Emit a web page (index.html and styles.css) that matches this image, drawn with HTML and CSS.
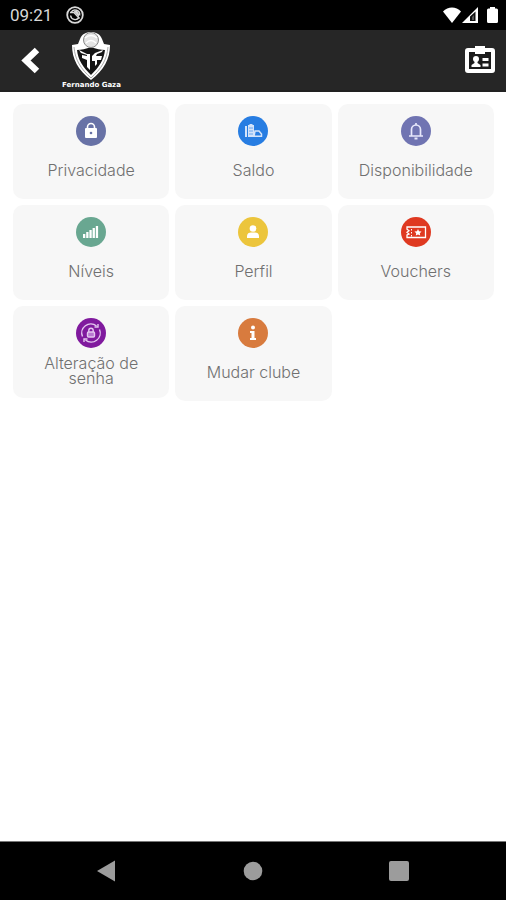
FILE: index.html
```html
<!DOCTYPE html>
<html lang="pt">
<head>
    <meta charset="UTF-8">
    <meta name="viewport" content="width=device-width, initial-scale=1.0">
    <title>Fernando Gaza</title>
    <link rel="stylesheet" href="styles.css">
</head>
<body>
    <div class="screen">
        <!-- Status bar -->
        <div class="status-bar">
            <span class="clock">09:21</span>
            <svg class="status-app" width="18" height="18" viewBox="0 0 18 18" fill="none" stroke="#d8d8d8">
                <circle cx="9" cy="9" r="7.8" stroke-width="1.8"/>
                <path d="M5 6.5a4.6 4.6 0 0 1 8.6 3M13 11.5A4.6 4.6 0 0 1 4.6 9.5" stroke-width="1.4"/>
                <path d="M4 6.5h4l5.500 6" stroke-width="1.6"/>
                <path d="M7.500 5h3.500l2 2.500v3.500z" fill="#d8d8d8" stroke="none"/>
            </svg>
            <div class="status-icons">
                <svg width="20" height="18" viewBox="0 0 20 18" fill="#fff">
                    <path d="M10 17L1 5.5C6 .2 14 .2 19 5.5z"/>
                </svg>
                <svg width="17" height="18" viewBox="0 0 17 18">
                    <path d="M0 17L16 1v16z" fill="#fff"/>
                    <path d="M8 15v-4.500L13.500 5.500V15z" fill="#111"/>
                    <path d="M10 14v-3l2-2v5z" fill="#555"/>
                </svg>
                <svg class="battery" width="11" height="18" viewBox="0 0 11 18" fill="#fff">
                    <path d="M3 1h5v1.5h1.5A1.5 1.5 0 0 1 11 4v11.500a1.5 1.5 0 0 1-1.5 1.5h-8A1.5 1.5 0 0 1 0 15.500V4a1.5 1.5 0 0 1 1.5-1.5H3z"/>
                </svg>
            </div>
        </div>

        <!-- Header -->
        <header class="header">
            <button class="icon-button" aria-label="Voltar">
                <svg width="20" height="28" viewBox="0 0 20 28" fill="none" stroke="#fff" stroke-width="6.5">
                    <path d="M17 4L6 14.5 17 25"/>
                </svg>
            </button>
            <a href="#" class="brand">
                <svg width="44" height="50" viewBox="0 0 44 50">
                    <path d="M22 1c5 0 9 2 11 7l2 5 6 1c0 14-6 25-19 35C9 39 3 28 3 14l6-1 2-5c2-5 6-7 11-7z" fill="#fff"/>
                    <path d="M22 16c5 2 10 3 14 3-1 10-6 17-14 25C14 36 9 29 8 19c4 0 9-1 14-3z" fill="#151515"/>
                    <circle cx="22" cy="9" r="7.5" fill="#e4e4e4" stroke="#888"/>
                    <path d="M16 7q6-5 12 0M17 12q5-5 10 0" fill="none" stroke="#fff" stroke-width="1.5"/>
                    <path d="M10 19l8 4h3v16l-3-3v-7l-5-2v-3l5 1v-1l-6-2z" fill="#fff"/>
                    <path d="M34 19l-8 3-3 3v5h3v5l2-2v-4h4l1-4h-6l1-2 5-2z" fill="#fff"/>
                    <path d="M5 16c1 13 7 22 17 31 10-9 16-18 17-31" fill="none" stroke="#aaa"/>
                </svg>
                <span class="brand-name">Fernando Gaza</span>
            </a>
            <button class="icon-button card-button" aria-label="Cartão de membro">
                <svg width="32" height="30" viewBox="0 0 32 30">
                    <path d="M4 3h7V1h10v2h7a3 3 0 0 1 3 3v19a3 3 0 0 1-3 3H4a3 3 0 0 1-3-3V6a3 3 0 0 1 3-3z" fill="#fff"/>
                    <path d="M5 7h6v2h10V7h6v17H5z" fill="#1c1c1c"/>
                    <circle cx="12" cy="14" r="3" fill="#fff"/>
                    <path d="M10.5 15h3v3l3 2v2h-9v-2l3-2z" fill="#fff"/>
                    <path d="M18.5 13h6v3h-6zM18.5 18.5h6v3h-6z" fill="#fff"/>
                </svg>
            </button>
        </header>

        <!-- Menu -->
        <main class="menu">
            <a href="#" class="card">
                <span class="badge privacy">
                    <svg viewBox="0 0 30 30">
                        <path d="M11.5 13v-2a3.5 3.5 0 0 1 7 0v2" fill="none" stroke="#fff" stroke-width="1.6"/>
                        <rect x="9" y="12" width="12" height="10" rx="1" fill="#fff"/>
                        <circle cx="15" cy="17" r="1.3" fill="#6872a6"/>
                    </svg>
                </span>
                <span class="label">Privacidade</span>
            </a>
            <a href="#" class="card">
                <span class="badge balance">
                    <svg viewBox="0 0 30 30">
                        <path d="M7 10h2v11H7zM10 9h1.500V8h3v1H16v12h-6z" fill="#d3e3fa"/>
                        <path d="M11 12h4M11 15h4M11 18h4" stroke="#6aa6ee"/>
                        <path d="M16 20.300h7.500V18l-2.500-3h-4z" fill="none" stroke="#d3e3fa" stroke-width="1.5"/>
                    </svg>
                </span>
                <span class="label">Saldo</span>
            </a>
            <a href="#" class="card">
                <span class="badge availability">
                    <svg viewBox="0 0 30 30" fill="none" stroke="#e7e8fb" stroke-width="1.7">
                        <path d="M10.5 19.500V13.500a4.5 4.5 0 0 1 9 0v6M8 20h14M15 7v2"/>
                        <path d="M13.5 22.500h3" stroke-width="2"/>
                    </svg>
                </span>
                <span class="label">Disponibilidade</span>
            </a>
            <a href="#" class="card">
                <span class="badge levels">
                    <svg viewBox="0 0 30 30" fill="#fff">
                        <path d="M7 17h2.300v4H7zM10.200 15h2.300v6h-2.300zM13.400 13h2.300v8h-2.300zM16.600 11h2.300v10h-2.300zM19.800 9h2.300v12h-2.300z"/>
                    </svg>
                </span>
                <span class="label">Níveis</span>
            </a>
            <a href="#" class="card">
                <span class="badge profile">
                    <svg viewBox="0 0 30 30" fill="#fff">
                        <circle cx="15" cy="11.500" r="3.300"/>
                        <path d="M9 21v-2c0-2.500 2-3.500 4-3.500h4c2 0 4 1 4 3.500v2z"/>
                    </svg>
                </span>
                <span class="label">Perfil</span>
            </a>
            <a href="#" class="card">
                <span class="badge vouchers">
                    <svg viewBox="0 0 30 30">
                        <path d="M6 10h18.500v10.500H6V18l2-1-2-1.700 2-1.500-2-1.600z" fill="none" stroke="#fff" stroke-width="1.300"/>
                        <path d="M10.500 12v1.500M10.500 15v1.500M10.500 18v1.500" stroke="#fff"/>
                        <path d="M17 12l1 2.200 2.500.3-1.700 1.700.4 2.300-2.200-1-2.200 1 .4-2.300-1.700-1.700 2.500-.3z" fill="#fff"/>
                    </svg>
                </span>
                <span class="label">Vouchers</span>
            </a>
            <a href="#" class="card">
                <span class="badge password">
                    <svg viewBox="0 0 30 30" fill="none" stroke="#e4c8f0" stroke-width="1.400">
                        <path d="M6.500 18.500A9 9 0 0 1 20.500 8M23.500 11.500A9 9 0 0 1 9.500 22"/>
                        <path d="M22 6v3h-3.500M8 24v-3h3.500"/>
                        <path d="M12.800 14v-1.500a2.200 2.200 0 0 1 4.400 0V14"/>
                        <rect x="11.500" y="14" width="7" height="5" rx="1" fill="#b878d0"/>
                    </svg>
                </span>
                <span class="label two-lines">Alteração de senha</span>
            </a>
            <a href="#" class="card">
                <span class="badge club">
                    <svg viewBox="0 0 30 30" fill="#fff">
                        <circle cx="15" cy="9.500" r="2"/>
                        <path d="M12 13h4.500v7H18v2h-6v-2h1.500v-5H12z"/>
                    </svg>
                </span>
                <span class="label">Mudar clube</span>
            </a>
        </main>

        <!-- System navigation -->
        <nav class="system-nav">
            <button aria-label="Voltar">
                <svg width="20" height="22" viewBox="0 0 20 22" fill="#9c9c9c"><path d="M1 11L19 .5v21z"/></svg>
            </button>
            <button aria-label="Início">
                <svg width="20" height="20" viewBox="0 0 20 20" fill="#9c9c9c"><circle cx="10" cy="10" r="9.300"/></svg>
            </button>
            <button aria-label="Recentes">
                <svg width="20" height="20" viewBox="0 0 20 20" fill="#9c9c9c"><rect width="20" height="20" rx="2"/></svg>
            </button>
        </nav>
    </div>
</body>
</html>
```
FILE: styles.css
```css
* {
    box-sizing: border-box;
}

body {
    margin: 0;
    font-family: Inter, "Open Sans", sans-serif;
    background: #fff;
}

svg {
    display: block;
}

button {
    padding: 0;
    border: none;
    background: none;
    cursor: pointer;
}

a {
    color: inherit;
    text-decoration: none;
}

.screen {
    display: flex;
    flex-direction: column;
    min-height: 100vh;
}

/* Status bar */
.status-bar {
    display: flex;
    align-items: center;
    height: 30px;
    padding: 0 8px 0 10px;
    background: #000;
    color: #d8d8d8;
}

.clock {
    font-family: Roboto, sans-serif;
    font-size: 17px;
    line-height: 20px;
}

.status-app {
    margin-left: 14px;
}

.status-icons {
    display: flex;
    margin-left: auto;
}

.battery {
    margin-left: 8px;
}

/* Header */
.header {
    display: flex;
    align-items: center;
    height: 62px;
    padding: 0 10px 0 20px;
    background: #262626;
    border-bottom: 2px solid #222;
}

.brand {
    display: flex;
    flex-direction: column;
    align-items: center;
    margin-left: 22px;
}

.brand-name {
    font-family: "DejaVu Sans", sans-serif;
    font-size: 7px;
    font-weight: bold;
    line-height: 8px;
    color: #fff;
}

.card-button {
    margin-left: auto;
}

/* Menu */
.menu {
    flex: 1;
    display: grid;
    grid-template-columns: repeat(3, 1fr);
    align-content: start;
    align-items: start;
    gap: 6px;
    padding: 12px 12px 12px 13px;
}

.card {
    display: flex;
    flex-direction: column;
    align-items: center;
    padding-top: 12px;
    border-radius: 10px;
    background: #f7f7f7;
}

.badge {
    width: 30px;
    height: 30px;
    border-radius: 50%;
}

.privacy { background: #6872a6; }
.balance { background: #277de2; }
.availability { background: #7074b2; }
.levels { background: #69a791; }
.profile { background: #ecc53c; }
.vouchers { background: #df3921; }
.password { background: #801a9e; }
.club { background: #d87b3e; }

.label {
    padding: 17px 16px 21px;
    font-size: 16px;
    font-weight: 300;
    line-height: 15px;
    text-align: center;
    color: #707070;
}

.label.two-lines {
    padding: 8px 20px 12px;
}

/* System navigation */
.system-nav {
    display: flex;
    align-items: center;
    justify-content: space-between;
    height: 59px;
    padding: 0 97px 0 96px;
    border-top: 1px solid #777;
    background: #000;
}
```
